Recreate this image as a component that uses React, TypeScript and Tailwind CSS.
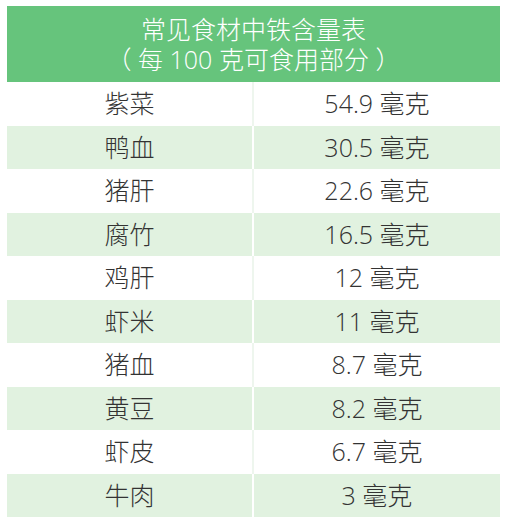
import React from 'react';

const rows = [
  { name: '紫菜', amount: '54.9 毫克' },
  { name: '鸭血', amount: '30.5 毫克' },
  { name: '猪肝', amount: '22.6 毫克' },
  { name: '腐竹', amount: '16.5 毫克' },
  { name: '鸡肝', amount: '12 毫克' },
  { name: '虾米', amount: '11 毫克' },
  { name: '猪血', amount: '8.7 毫克' },
  { name: '黄豆', amount: '8.2 毫克' },
  { name: '虾皮', amount: '6.7 毫克' },
  { name: '牛肉', amount: '3 毫克' },
];

export default function App() {
  return (
    <div
      className="w-[507px] h-[526px] bg-white px-[7px] pt-[6px] font-light text-[#333333]"
      style={{ fontFamily: '"Open Sans", "Noto Sans CJK SC", sans-serif' }}
    >
      <div className="flex h-[76px] flex-col items-center justify-center bg-[#66c47c] text-[25px] leading-[30px] text-white">
        <div>常见食材中铁含量表</div>
        <div>（ 每 100 克可食用部分 ）</div>
      </div>
      <div className="flex flex-col">
        {rows.map((r, i) => {
          const green = i % 2 === 1;
          return (
            <div
              key={r.name}
              className={`flex h-[43.5px] items-center text-[25px] ${green ? 'bg-[#e1f2e0]' : 'bg-white'}`}
            >
              <div className="flex w-[245px] justify-center">{r.name}</div>
              <div
                className={`flex h-full flex-1 items-center justify-center border-l-2 ${
                  green ? 'border-white' : 'border-[#eef6ee]'
                }`}
              >
                {r.amount}
              </div>
            </div>
          );
        })}
      </div>
    </div>
  );
}
